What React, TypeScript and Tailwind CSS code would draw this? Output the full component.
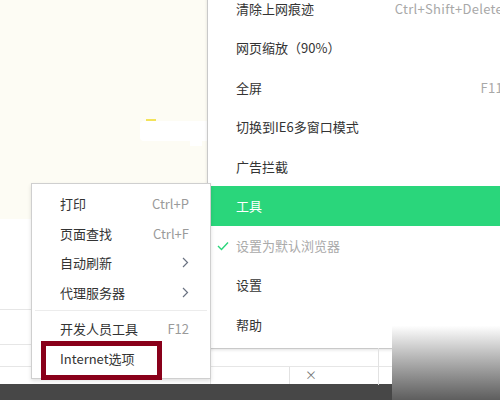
import React from "react";

const font = "font-['Noto_Sans_CJK_SC','Noto_Sans',sans-serif]";

const mainItems: { label: string; key?: string; active?: boolean; checked?: boolean }[] = [
  { label: "清除上网痕迹", key: "Ctrl+Shift+Delete" },
  { label: "网页缩放（90%）" },
  { label: "全屏", key: "F11" },
  { label: "切换到IE6多窗口模式" },
  { label: "广告拦截" },
  { label: "工具", active: true },
  { label: "设置为默认浏览器", checked: true },
  { label: "设置" },
  { label: "帮助" },
];

const Chevron = () => (
  <svg width="7" height="11" viewBox="0 0 7 11" className="text-gray-500">
    <path d="M1 1l4.5 4.5L1 10" fill="none" stroke="currentColor" strokeWidth="1.2" />
  </svg>
);

const Check = () => (
  <svg width="12" height="10" viewBox="0 0 12 10" className="text-[#2ad67b]">
    <path d="M1 5l3.5 3.5L11 1.5" fill="none" stroke="currentColor" strokeWidth="1.4" />
  </svg>
);

const SubRow = ({ label, right, h = "h-[29.5px]" }: { label: string; right?: React.ReactNode; h?: string }) => (
  <div className={`flex ${h} items-center justify-between pl-[28px] pr-[21px] text-[13px] text-[#333]`}>
    <span>{label}</span>
    <span className="text-[#9a9a9a]">{right}</span>
  </div>
);

const App = () => (
  <div className={`relative h-[400px] w-[500px] overflow-hidden bg-white ${font}`}>
    {/* page behind the menus */}
    <div className="flex h-full flex-col">
      <div className="h-[219px] w-full bg-[#fdfcf4]" />
      <div className="flex flex-1 flex-col bg-white">
        <div className="h-[90px]" />
        <div className="h-[35px] border-t border-[#e6e6e6]" />
        <div className="h-[22px] border-t border-[#e6e6e6]" />
        <div className="flex flex-1 border-t border-[#e6e6e6]">
          <div className="ml-[210px] w-[80px] border-x border-[#e2e2e2]" />
          <span className="ml-[15px] mt-[2px] text-[12px] leading-none text-[#777]">×</span>
        </div>
      </div>
      <div className="h-[16px] w-full bg-[#474747]" />
    </div>

    {/* smudge on the page */}
    <div className="absolute left-[146px] top-[119px] h-[2px] w-[10px] bg-[#f3e35a]" />
    <div className="absolute left-[140px] top-[121px] h-[20px] w-[70px] rounded-sm bg-white" />
    <div className="absolute left-[190px] top-[138px] h-[8px] w-[12px] bg-white" />

    {/* main menu */}
    <div className="absolute left-[207px] top-[-11.5px] w-[310px] border-l border-b border-[#c9c9c9] bg-white pb-[4px] shadow-[0_1px_3px_rgba(0,0,0,0.12)]">
      {mainItems.map((it) => (
        <div
          key={it.label}
          className={`flex h-[39.5px] items-center justify-between pl-[28px] pr-[14px] text-[13px] ${
            it.active ? "bg-[#2ad67b] text-white" : it.checked ? "text-[#aaaaaa]" : "text-[#333]"
          }`}
        >
          <span className="relative">
            {it.checked && (
              <span className="absolute left-[-19px] top-[5px]">
                <Check />
              </span>
            )}
            {it.label}
          </span>
          <span className="tracking-[0.3px] text-[#a8a8a8]">{it.key}</span>
        </div>
      ))}
      <div className="absolute bottom-[-37px] left-[170px] h-[37px] border-l border-[#e2e2e2]" />
    </div>

    {/* bottom right gradient */}
    <div className="absolute left-[392px] top-[307px] h-[93px] w-[108px] bg-gradient-to-b from-white from-20% to-[#5e5e5e]" />

    {/* tools submenu */}
    <div className="absolute left-[31px] top-[183px] w-[180px] border border-[#cfcfcf] bg-white pt-[5px] pb-[4px] shadow-[0_2px_4px_rgba(0,0,0,0.12)]">
      <SubRow label="打印" right="Ctrl+P" />
      <SubRow label="页面查找" right="Ctrl+F" />
      <SubRow label="自动刷新" right={<Chevron />} />
      <SubRow label="代理服务器" right={<Chevron />} />
      <div className="mx-[3px] my-[3px] border-t border-[#ececec]" />
      <SubRow label="开发人员工具" right="F12" h="h-[30px]" />
      <SubRow label="Internet选项" h="h-[30px]" />
    </div>

    {/* highlight box */}
    <div className="absolute left-[41px] top-[341px] h-[39px] w-[121px] border-[5px] border-[#89001a]" />
  </div>
);

export default App;
